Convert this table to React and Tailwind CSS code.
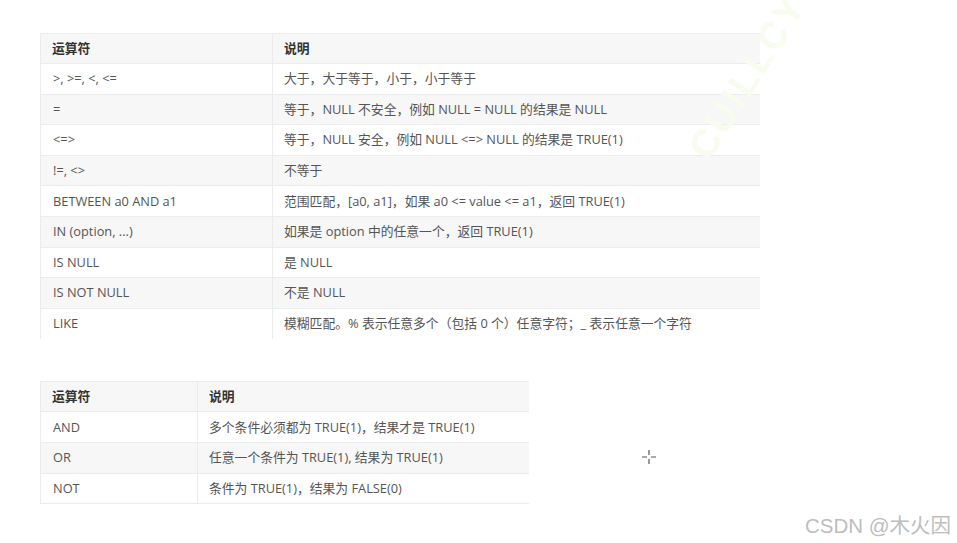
import React from "react";

const t1 = [
  [">, >=, <, <=", "大于，大于等于，小于，小于等于"],
  ["=", "等于，NULL 不安全，例如 NULL = NULL 的结果是 NULL"],
  ["<=>", "等于，NULL 安全，例如 NULL <=> NULL 的结果是 TRUE(1)"],
  ["!=, <>", "不等于"],
  ["BETWEEN a0 AND a1", "范围匹配，[a0, a1]，如果 a0 <= value <= a1，返回 TRUE(1)"],
  ["IN (option, ...)", "如果是 option 中的任意一个，返回 TRUE(1)"],
  ["IS NULL", "是 NULL"],
  ["IS NOT NULL", "不是 NULL"],
  ["LIKE", "模糊匹配。% 表示任意多个（包括 0 个）任意字符；_ 表示任意一个字符"],
];

const t2 = [
  ["AND", "多个条件必须都为 TRUE(1)，结果才是 TRUE(1)"],
  ["OR", "任意一个条件为 TRUE(1), 结果为 TRUE(1)"],
  ["NOT", "条件为 TRUE(1)，结果为 FALSE(0)"],
];

const font = { fontFamily: '"Open Sans", "Noto Sans CJK SC", sans-serif' };

function Table({ rows, w1, w2, last }) {
  return (
    <div className="flex flex-col border-l border-[#ececec] text-[12.8px] text-[#555]" style={{ width: w1 + w2 }}>
      <div className="flex h-[31px] items-center border-t border-b border-[#ececec] bg-[#f7f7f7] font-bold text-[#333]">
        <div className="flex h-full items-center border-r border-[#ececec] pl-[11px]" style={{ width: w1 }}>运算符</div>
        <div className="flex h-full items-center pl-[11px]">说明</div>
      </div>
      {rows.map((r, i) => (
        <div
          key={i}
          className={
            "flex h-[30.6px] items-center " +
            (i % 2 === 1 ? "bg-[#f7f7f7] " : "bg-white ") +
            (i === rows.length - 1 && !last ? "" : "border-b border-[#ececec]")
          }
        >
          <div className="flex h-full items-center border-r border-[#ececec] pl-[12px]" style={{ width: w1 }}>{r[0]}</div>
          <div className="flex h-full items-center pl-[11px] whitespace-nowrap">{r[1]}</div>
        </div>
      ))}
    </div>
  );
}

export default function App() {
  return (
    <div className="relative h-[543px] w-[957px] overflow-hidden bg-white" style={font}>
      <div className="pl-[40px] pt-[33px]">
        <Table rows={t1} w1={232} w2={488} last={false} />
      </div>
      <div className="pl-[40px] pt-[42px]">
        <Table rows={t2} w1={157} w2={332} last={true} />
      </div>
      <div
        className="pointer-events-none absolute left-[655px] top-[48px] -rotate-[58deg] text-[38px] font-semibold tracking-[3px] text-[#f7fcef]"
        style={{ fontFamily: '"Liberation Sans", sans-serif' }}
      >
        CUILLCY
      </div>
      <svg className="absolute left-[642px] top-[450px]" width="14" height="14" viewBox="0 0 14 14">
        <path d="M7 0v5M7 9v5M0 7h5M9 7h5" stroke="#555" strokeWidth="1.2" />
      </svg>
      <div
        className="absolute left-[805px] top-[511px] text-[20.5px] text-[#bdbdbd]"
        style={{ fontFamily: '"Liberation Sans", "Noto Sans CJK SC", sans-serif' }}
      >
        CSDN @木火因
      </div>
    </div>
  );
}
